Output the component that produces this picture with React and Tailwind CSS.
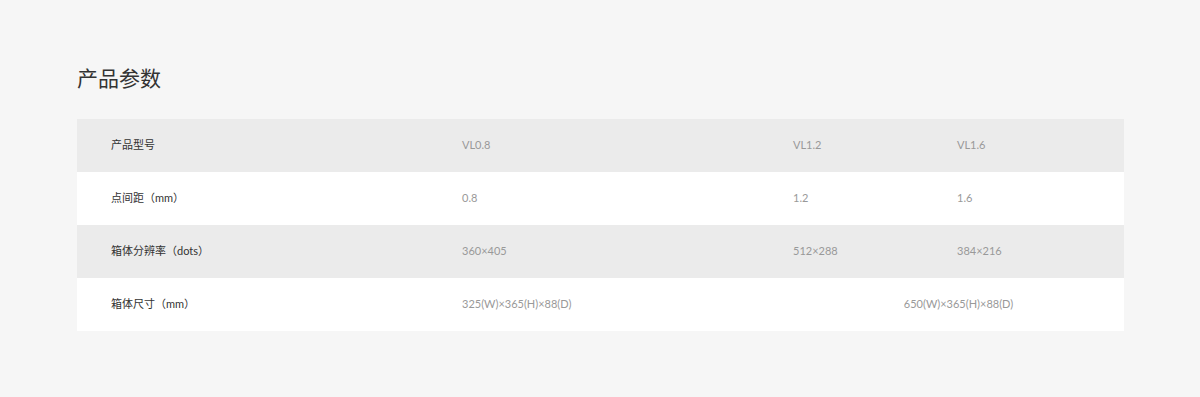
const rows = [
  { label: '产品型号', cells: ['VL0.8', 'VL1.2', 'VL1.6'], shade: true },
  { label: '点间距（mm）', cells: ['0.8', '1.2', '1.6'] },
  { label: '箱体分辨率（dots）', cells: ['360×405', '512×288', '384×216'], shade: true },
];

const App = () => {
  return (
    <div
      className="min-h-[397px] bg-[#f6f6f6] px-[77px] pt-[64px]"
      style={{ fontFamily: 'Lato, "Noto Sans CJK SC", sans-serif' }}
    >
      <h2 className="text-[21px] leading-[28px] text-[#333] mb-[27px]">产品参数</h2>
      <div className="w-[1047px] text-[11px]">
        {rows.map((row) => (
          <div
            key={row.label}
            className={`grid grid-cols-[351px_331px_164px_201px] h-[53px] items-center ${row.shade ? 'bg-[#ebebeb]' : 'bg-white'}`}
          >
            <div className="pl-[34px] text-[#333]">{row.label}</div>
            {row.cells.map((c) => (
              <div key={c} className="pl-[34px] text-[#999]">{c}</div>
            ))}
          </div>
        ))}
        <div className="grid grid-cols-[351px_331px_164px_201px] h-[53px] items-center bg-white">
          <div className="pl-[34px] text-[#333]">箱体尺寸（mm）</div>
          <div className="pl-[34px] text-[#999]">325(W)×365(H)×88(D)</div>
          <div className="col-span-2 pl-[34px] text-center text-[#999]">650(W)×365(H)×88(D)</div>
        </div>
      </div>
    </div>
  );
};

export default App;
